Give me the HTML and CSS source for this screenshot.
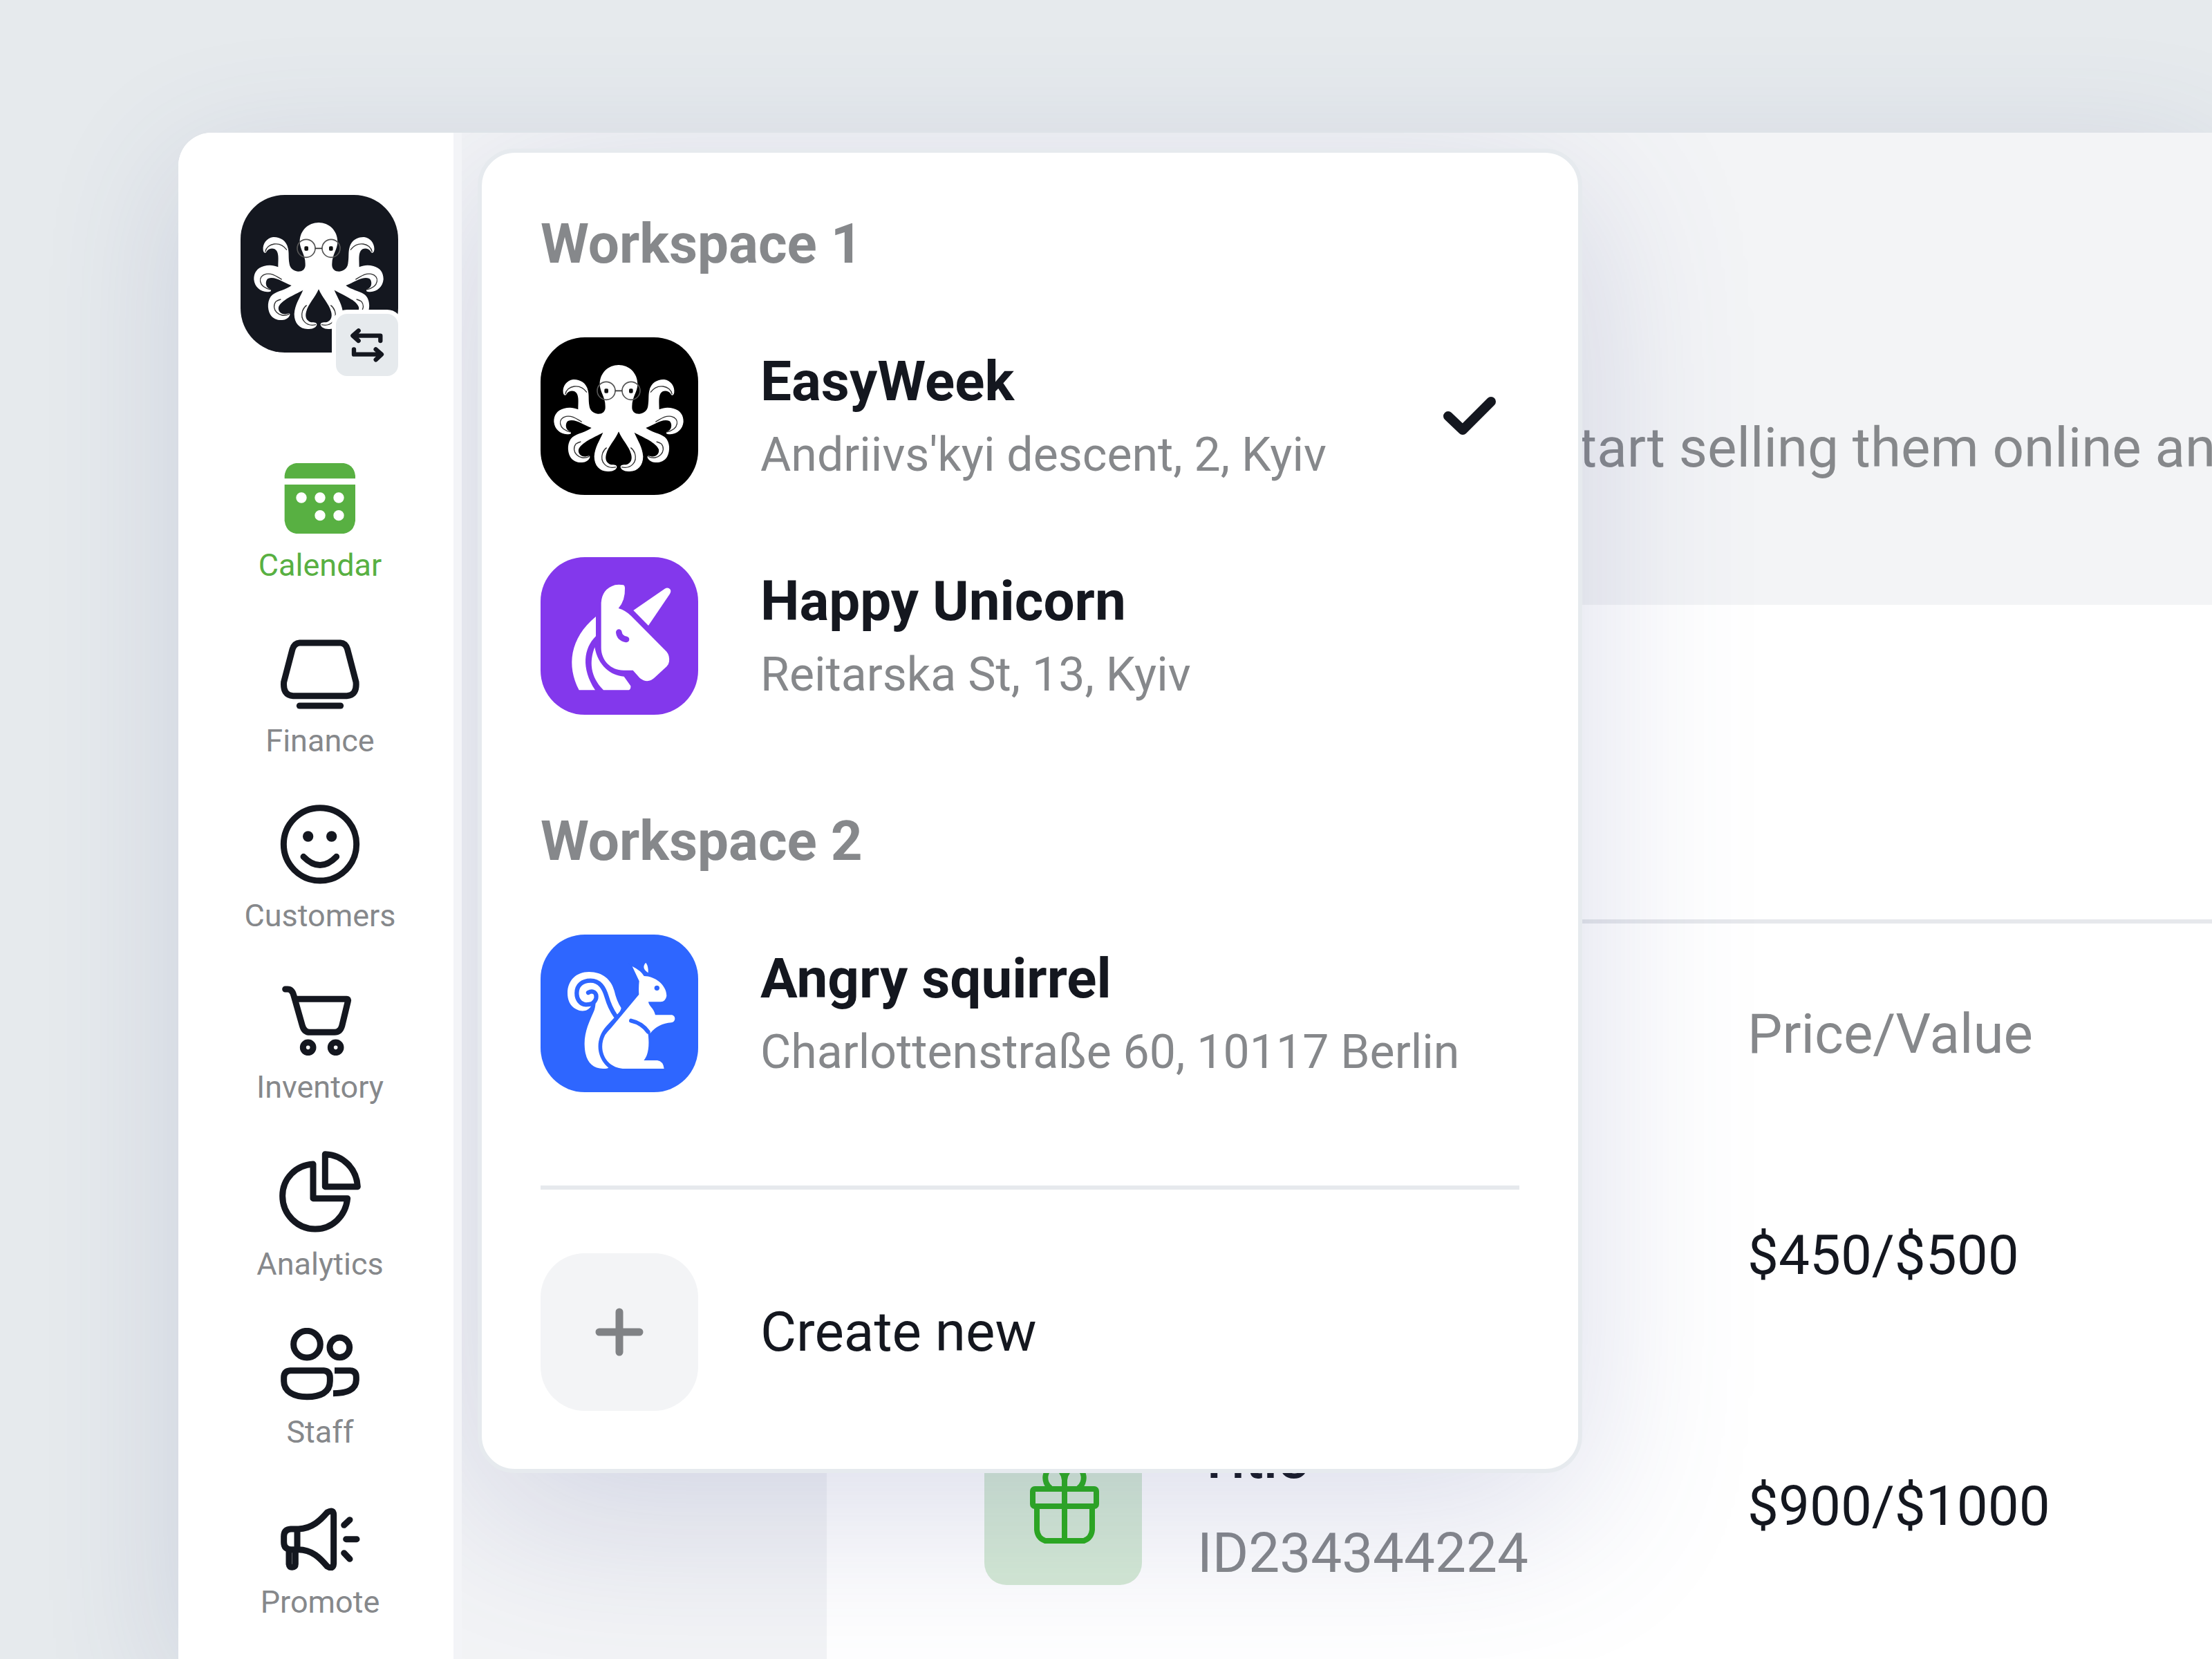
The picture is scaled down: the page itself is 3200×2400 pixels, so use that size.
FILE: index.html
```html
<!DOCTYPE html>
<html lang="en">
<head>
<meta charset="utf-8">
<meta name="viewport" content="width=device-width, initial-scale=1">
<title>EasyWeek</title>
<link rel="stylesheet" href="styles.css">
</head>
<body>
<svg class="defs" aria-hidden="true">
  <symbol id="octopus" viewBox="65 53 684 684">
    <g id="octopus-half">
      <path fill="#fff" d="M405 173 C358 173 322 208 322 256 C322 290 346 310 346 352 C348 376 332 386 314 385 C294 383 280 370 277 352 C272 325 276 305 271 285 C264 248 232 234 206 236 C178 240 160 266 163 292 C165 306 174 308 178 298 C190 282 212 282 222 296 C232 312 228 340 228 366 C206 356 186 356 166 362 C136 370 122 392 123 420 C126 456 158 480 194 472 C202 468 194 462 186 458 C172 450 172 424 184 416 C216 404 250 434 286 446 C264 464 224 470 204 486 C180 506 180 548 194 572 C214 604 262 602 276 580 C284 568 276 564 264 570 C244 574 226 560 230 540 C240 510 296 488 336 466 C322 500 300 530 298 570 C298 612 324 638 362 635 C382 634 394 626 396 616 C396 606 384 606 372 606 C350 600 344 582 350 560 C360 524 388 500 404 462 L408 462 V173 Z"/>
      <g fill="none" stroke="#333" stroke-width="4">
        <path d="M172 300 C180 262 236 250 266 292"/>
        <path d="M196 464 C140 452 138 404 176 396 C206 392 222 408 244 420"/>
        <path d="M276 570 C232 592 194 546 218 516 Q226 510 240 506"/>
        <path d="M392 616 C350 626 322 594 334 556 Q340 540 352 532"/>
      </g>
      <circle cx="350" cy="285" r="39" fill="none" stroke="#555" stroke-width="5"/>
      <rect x="342" y="276" width="17" height="19" rx="5" fill="#111"/>
    </g>
    <use href="#octopus-half" transform="translate(808 0) scale(-1 1)"/>
    <path d="M389 285 H419" stroke="#333" stroke-width="5"/>
  </symbol>
</svg>

<div class="window">
  <aside class="sidebar">
    <button class="switcher" type="button" aria-label="Switch workspace">
      <svg class="switcher-logo" aria-hidden="true"><use href="#octopus"/></svg>
      <span class="switcher-badge">
        <svg viewBox="468 582 270 270" fill="none" stroke="#14171f" stroke-width="19" stroke-linecap="round" stroke-linejoin="round" aria-hidden="true">
          <path d="M661 699 V677 H545 M566 655 L541 677 L566 699"/>
          <path d="M546 736 V758 H662 M641 736 L666 758 L641 781"/>
        </svg>
      </span>
    </button>
    <nav class="nav" aria-label="Main">
      <a class="nav-item active" href="#calendar">
        <svg width="120" height="102" viewBox="189 90 360 306" fill="currentColor" aria-hidden="true">
          <path d="M215 157 V145 Q220 98 265 90 H472 Q517 98 522 145 V157 Z"/>
          <path d="M215 183 H522 V340 Q517 388 472 396 H265 Q220 388 215 340 Z"/>
          <g fill="#fff"><circle cx="288" cy="240" r="23"/><circle cx="369" cy="240" r="23"/><circle cx="450" cy="240" r="23"/><circle cx="369" cy="317" r="23"/><circle cx="450" cy="317" r="23"/></g>
        </svg>
        <span>Calendar</span>
      </a>
      <a class="nav-item" href="#finance">
        <svg width="120" height="116" viewBox="189 810 360 348" class="line" aria-hidden="true">
          <path d="M280 870 H458 Q480 871 488 898 L525 1040 Q530 1098 485 1100 H252 Q207 1098 212 1040 L249 898 Q258 871 280 870 Z"/>
          <path d="M280 1143 H458"/>
        </svg>
        <span>Finance</span>
      </a>
      <a class="nav-item" href="#customers">
        <svg width="120" height="115" viewBox="189 102 360 345" class="line" aria-hidden="true">
          <circle cx="369" cy="274" r="158"/>
          <path d="M297 328 Q369 401 440 328"/>
          <g fill="#14171f" stroke="none"><circle cx="317" cy="240" r="23"/><circle cx="419" cy="240" r="23"/></g>
        </svg>
        <span>Customers</span>
      </a>
      <a class="nav-item" href="#inventory">
        <svg width="120" height="110" viewBox="189 860 360 330" class="line" aria-hidden="true">
          <path d="M218 902 H228 Q248 902 255 930 L292 1060 Q300 1089 325 1089 H432 Q456 1089 464 1062 L490 955 Q493 945 484 945 H262"/>
          <circle cx="317" cy="1155" r="22"/><circle cx="437" cy="1155" r="22"/>
        </svg>
        <span>Inventory</span>
      </a>
      <a class="nav-item" href="#analytics">
        <svg width="120" height="118" viewBox="189 75 360 354" class="line" aria-hidden="true">
          <path d="M391 89 C468 92 528 152 532 230 H391 Z"/>
          <path d="M339 132 V281 H488 C480 360 420 414 348 414 C270 414 206 350 206 270 C206 196 264 136 339 132 Z"/>
        </svg>
        <span>Analytics</span>
      </a>
      <a class="nav-item" href="#staff">
        <svg width="120" height="105" viewBox="189 844 360 315" class="line" aria-hidden="true">
          <circle cx="312" cy="915" r="58"/><circle cx="454" cy="929" r="43"/>
          <path d="M240 1029 H385 Q412 1031 412 1060 V1075 C412 1125 370 1143 312 1143 C255 1143 212 1120 212 1075 V1060 Q212 1031 240 1029 Z"/>
          <path stroke-linecap="butt" d="M432 1029 H500 Q526 1031 526 1058 V1070 C526 1112 484 1128 426 1128"/>
        </svg>
        <span>Staff</span>
      </a>
      <a class="nav-item" href="#promote">
        <svg width="120" height="108" viewBox="189 194 360 324" class="line" aria-hidden="true">
          <path d="M242 338 H275 C336 336 372 298 400 266 Q428 250 428 276 V488 Q426 516 400 500 C370 465 335 427 275 427 H242 Q212 425 212 395 V370 Q212 340 242 338 Z M270 338 V427"/>
          <path d="M234 430 V490 Q236 504 248 504 Q262 504 262 490 V430 M473 321 L498 298 M482 382 H528 M473 442 L498 468"/>
        </svg>
        <span>Promote</span>
      </a>
    </nav>
  </aside>

  <main class="main">
    <header class="intro"><p>tart selling them online an</p></header>
    <section class="card">
      <div class="toolbar"></div>
      <table class="items">
        <thead>
          <tr><td></td><th scope="col">Price/Value</th></tr>
        </thead>
        <tbody>
          <tr><td></td><td>$450/$500</td></tr>
          <tr>
            <td>
              <div class="item">
                <svg class="item-icon" viewBox="1424 2064 228 228" fill="none" stroke="#2aad1a" stroke-width="8" stroke-linejoin="round" aria-hidden="true">
                  <rect x="1494" y="2153" width="92" height="25" rx="3"/>
                  <path d="M1500 2179 V2212 Q1501 2224 1512 2228 H1568 Q1579 2224 1580 2212 V2179 M1540 2132 V2228"/>
                  <path d="M1520 2152 C1508 2144 1510 2122 1526 2122 Q1538 2124 1540 2140 Q1542 2124 1554 2122 C1570 2122 1572 2144 1560 2152"/>
                </svg>
                <div><div class="item-title">Title</div><div class="item-id">ID234344224</div></div>
              </div>
            </td>
            <td>$900/$1000</td>
          </tr>
        </tbody>
      </table>
    </section>

    <div class="panel">
      <h2>Workspace 1</h2>
      <div class="group">
        <button class="place" type="button">
          <svg class="tile black" aria-hidden="true"><use href="#octopus"/></svg>
          <span class="place-text"><strong>EasyWeek</strong><span>Andriivs'kyi descent, 2, Kyiv</span></span>
          <svg class="check" viewBox="0 0 144 144" fill="none" stroke="#14171f" stroke-width="14" stroke-linecap="round" stroke-linejoin="round" aria-label="Selected"><path d="M41 72 L62 92 L103 51"/></svg>
        </button>
        <button class="place" type="button">
          <svg class="tile purple" viewBox="65 77 684 684" fill="#fff" aria-hidden="true">
            <path d="M468 308 L604 214 Q618 206 628 217 Q633 226 625 238 L533 374 Z"/>
            <path d="M424 198 Q431 200 431 212 Q433 265 403 299 Q434 308 458 332 L612 487 Q626 504 623 530 Q621 544 612 552 L560 600 Q530 628 496 602 L466 568 H425 C370 568 328 525 328 470 V275 Q332 215 388 198 Q404 195 424 198 Z"/>
            <path d="M305 335 V420 C252 472 240 560 302 654 H232 C178 550 190 430 305 335 Z"/>
            <path d="M300 468 C314 548 370 592 427 595 L456 636 Q458 650 448 654 H338 C280 596 276 530 300 468 Z"/>
            <path d="M405 403 Q408 428 437 434" fill="none" stroke="#8338ec" stroke-width="26" stroke-linecap="round"/>
          </svg>
          <span class="place-text"><strong>Happy Unicorn</strong><span>Reitarska St, 13, Kyiv</span></span>
        </button>
      </div>
      <h2>Workspace 2</h2>
      <div class="group">
        <button class="place" type="button">
          <svg class="tile blue" viewBox="65 66 684 684" fill="#fff" aria-hidden="true">
            <path d="M284 376 C274 398 244 404 220 390 C190 375 182 345 182 320 C182 265 220 228 275 228 C335 228 372 262 385 310 Q395 355 415 385 Q412 400 400 410 L350 464 C300 520 306 600 360 644 Q356 648 336 648 C286 646 258 615 256 545 C254 490 278 440 296 400 Q302 386 304 362 Z"/>
            <path fill="none" stroke="#2e66ff" stroke-width="19" stroke-linecap="round" stroke-linejoin="round" d="M272 318 C292 306 310 318 306 342 C302 362 282 370 262 370 C236 368 222 346 222 320 C222 286 246 266 282 266 C322 266 340 296 352 336 Q366 384 390 418"/>
            <path d="M463 204 Q500 222 514 246 C560 246 612 284 612 332 Q608 356 586 358 H533 C534 376 556 384 563 415 H635 Q648 418 648 432 Q646 446 632 448 Q576 452 541 494 L530 482 C540 550 532 590 513 612 H572 Q598 616 601 648 H430 C352 648 310 570 345 502 Q356 486 372 470 L492 326 Q490 300 493 268 Q478 236 463 204 Z" stroke="#2e66ff" stroke-width="14" paint-order="stroke"/>
            <path fill="none" stroke="#2e66ff" stroke-width="18" stroke-linecap="round" d="M458 440 Q504 450 532 488"/>
            <path d="M522 188 Q500 210 532 232 Q534 204 522 188 Z"/>
            <circle cx="570" cy="298" r="11" fill="#2e66ff"/>
          </svg>
          <span class="place-text"><strong>Angry squirrel</strong><span>Charlottenstraße 60, 10117 Berlin</span></span>
        </button>
      </div>
      <hr>
      <button class="place" type="button">
        <svg class="tile plain" viewBox="0 0 228 228" stroke="#808285" stroke-width="11" stroke-linecap="round" aria-hidden="true"><path d="M114 85 V143 M85 114 H143"/></svg>
        <span class="create">Create new</span>
      </button>
    </div>
  </main>
</div>
</body>
</html>
```
FILE: styles.css
```css
* { box-sizing: border-box; }

body {
  margin: 0;
  min-height: 100vh;
  padding: 192px 0 0 258px;
  background: #e6eaed;
  color: #14171f;
  font-family: Roboto, "Liberation Sans", sans-serif;
  font-size: 80px;
  line-height: 96px;
  overflow: hidden;
}

h2, p { margin: 0; }

button {
  border: 0;
  padding: 0;
  background: none;
  color: inherit;
  font: inherit;
  text-align: left;
}

.defs { position: absolute; width: 0; height: 0; }

.window {
  display: flex;
  min-height: calc(100vh - 192px);
  border-radius: 48px 0 0 0;
  background: #fff;
  box-shadow: 0 48px 200px rgba(70, 80, 140, 0.16);
}

/* Sidebar */

.sidebar {
  flex: none;
  width: 410px;
  padding: 90px 78px 0 90px;
  border-right: 12px solid #f3f4f7;
  border-radius: 48px 0 0 0;
  background: #fff;
}

.switcher { position: relative; display: block; width: 228px; height: 228px; }

.switcher-logo {
  display: block;
  width: 228px;
  height: 228px;
  border-radius: 64px;
  background: #14171f;
}

.switcher-badge {
  position: absolute;
  right: -6px;
  bottom: -40px;
  width: 102px;
  height: 102px;
  border: 6px solid #fff;
  border-radius: 22px;
  background: #e6eaed;
}

.switcher-badge svg { display: block; width: 90px; height: 90px; }

.nav {
  display: flex;
  flex-direction: column;
  gap: 64px;
  margin-top: 160px;
}

.nav-item {
  display: flex;
  flex-direction: column;
  align-items: center;
  gap: 18px;
  color: #86888b;
  font-size: 45px;
  line-height: 56px;
  text-decoration: none;
}

.nav-item.active { color: #58b042; }

.nav-item svg { display: block; }

.line {
  fill: none;
  stroke: #14171f;
  stroke-width: 27px;
  stroke-linecap: round;
  stroke-linejoin: round;
}

/* Page behind the workspace menu */

.main {
  position: relative;
  flex: 1;
  min-width: 0;
  overflow: hidden;
  background: #f3f4f6;
}

.intro {
  height: 683px;
  padding: 408px 0 0 1616px;
  color: #86888b;
  white-space: nowrap;
}

.card {
  min-height: 1525px;
  margin-left: 528px;
  background: #fff;
}

.toolbar { height: 461px; border-bottom: 6px solid #e6e8ec; }

.items {
  width: 100%;
  margin-top: 22px;
  border-collapse: collapse;
  table-layout: fixed;
}

.items td, .items th { padding: 0; text-align: left; font-weight: 400; }
.items th { height: 276px; color: #86888b; }
.items tbody td { height: 363px; }
.items tr > :first-child { width: 1332px; padding-left: 228px; }

.item { display: flex; align-items: center; gap: 80px; }

.item-icon {
  flex: none;
  width: 228px;
  height: 228px;
  border-radius: 32px;
  background: #d5ead5;
}

.item-title { margin-bottom: 40px; font-weight: 500; }
.item-id { color: #86888b; }

/* Workspace menu */

.panel {
  position: absolute;
  top: 23px;
  left: 23px;
  width: 1598px;
  padding: 84px 85px;
  border: 6px solid #e6eaee;
  border-radius: 54px;
  background: #fff;
  box-shadow: 0 60px 440px rgba(70, 80, 150, 0.2);
}

.panel h2 {
  color: #86888b;
  font-size: 80px;
  font-weight: 700;
  line-height: 96px;
}

.group {
  display: flex;
  flex-direction: column;
  gap: 90px;
  margin: 87px 0 135px;
}

.place {
  display: flex;
  align-items: center;
  gap: 90px;
  width: 100%;
}

.tile { flex: none; width: 228px; height: 228px; border-radius: 64px; }
.black { background: #000; }
.purple { background: #8338ec; }
.blue { background: #2e66ff; }
.plain { background: #f3f4f6; }

.place-text { flex: 1; display: flex; flex-direction: column; gap: 10px; padding-top: 6px; }
.place-text strong { font-weight: 700; }
.place-text span { color: #86888b; font-size: 68px; }

.check { flex: none; width: 144px; height: 144px; }

.panel hr {
  height: 6px;
  margin: 0 0 92px;
  border: 0;
  background: #e6e9ed;
}
```
